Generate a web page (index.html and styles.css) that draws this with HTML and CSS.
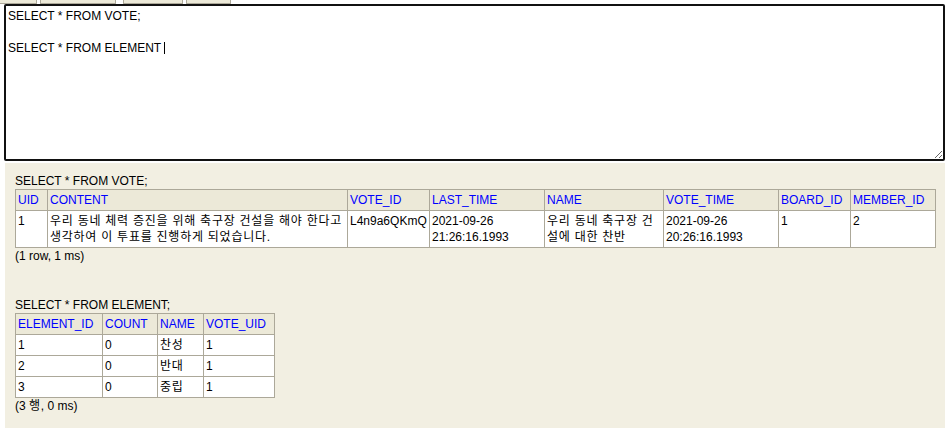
FILE: index.html
```html
<!DOCTYPE html>
<html lang="ko">
<head>
<meta charset="utf-8">
<title>H2 Console</title>
<link rel="stylesheet" href="styles.css">
</head>
<body>
<div class="page">
  <div class="tabs">
    <span class="tab tab-a"></span>
    <span class="tab tab-b"></span>
    <span class="tab tab-c"></span>
    <span class="tab tab-d"></span>
  </div>
  <div class="editor">SELECT * FROM VOTE;

SELECT * FROM ELEMENT <span class="caret"></span></div>
  <div class="result">
    <p class="query">SELECT * FROM VOTE;</p>
    <table class="grid grid-vote">
      <colgroup>
        <col class="w-uid"><col class="w-content"><col class="w-voteid"><col class="w-last"><col class="w-name"><col class="w-vtime"><col class="w-board"><col class="w-member">
      </colgroup>
      <tr><th>UID</th><th>CONTENT</th><th>VOTE_ID</th><th>LAST_TIME</th><th>NAME</th><th>VOTE_TIME</th><th>BOARD_ID</th><th>MEMBER_ID</th></tr>
      <tr><td>1</td><td class="ko">우리 동네 체력 증진을 위해 축구장 건설을 해야 한다고 생각하여 이 투표를 진행하게 되었습니다.</td><td>L4n9a6QKmQ</td><td>2021-09-26 21:26:16.1993</td><td class="ko">우리 동네 축구장 건설에 대한 찬반</td><td>2021-09-26 20:26:16.1993</td><td>1</td><td>2</td></tr>
    </table>
    <p class="status status-gap">(1 row, 1 ms)</p>
    <p class="query">SELECT * FROM ELEMENT;</p>
    <table class="grid grid-element">
      <colgroup>
        <col class="w-eid"><col class="w-count"><col class="w-ename"><col class="w-vuid">
      </colgroup>
      <tr><th>ELEMENT_ID</th><th>COUNT</th><th>NAME</th><th>VOTE_UID</th></tr>
      <tr><td>1</td><td>0</td><td class="ko">찬성</td><td>1</td></tr>
      <tr><td>2</td><td>0</td><td class="ko">반대</td><td>1</td></tr>
      <tr><td>3</td><td>0</td><td class="ko">중립</td><td>1</td></tr>
    </table>
    <p class="status">(3 <span class="ko">행</span>, 0 ms)</p>
  </div>
</div>
</body>
</html>
```

FILE: styles.css
```css
html, body {
  margin: 0;
  padding: 0;
  background: #ffffff;
  overflow: hidden;
}
body, td, th, p, div {
  font-family: "Liberation Sans", "Noto Sans CJK KR", sans-serif;
  font-size: 12px;
  line-height: 16px;
  color: #000;
}
.page {
  display: flex;
  flex-direction: column;
  height: 428px;
}
.tabs {
  display: flex;
  height: 4px;
  flex: none;
}
.tab {
  display: block;
  height: 4px;
  box-sizing: border-box;
  background: #ece9d8;
  border: 1px solid #aca899;
  border-top: none;
}
.tab-a { width: 37px; border-left: none; }
.tab-b { width: 76px; margin-left: 3px; }
.tab-c { width: 60px; margin-left: 7px; }
.tab-d { width: 45px; margin-left: 3px; }

.editor {
  flex: none;
  box-sizing: border-box;
  margin-left: 4px;
  width: 941px;
  height: 157px;
  border: 2px solid #111111;
  border-radius: 2px;
  padding: 2px;
  white-space: pre-wrap;
  background: #fff;
  overflow: auto;
  resize: both;
}
.caret {
  display: inline-block;
  width: 1px;
  height: 12px;
  background: #000;
  vertical-align: -2px;
}
.result {
  flex: 1;
  margin: 2px 0 0 5px;
  padding: 10px 10px 0 10px;
  background: #f2efe2;
}
.query, .status {
  margin: 0;
}
.status-gap {
  margin-bottom: 33px;
}
.ko {
  letter-spacing: 0.75px;
}
.grid {
  border-collapse: collapse;
  table-layout: fixed;
  background: #ece9d8;
}
.grid th, .grid td {
  border: 1px solid #aca899;
  padding: 2px;
  text-align: left;
  vertical-align: top;
  font-weight: normal;
}
.grid th {
  background: #ece9d8;
  color: #0000ff;
  white-space: nowrap;
  overflow: hidden;
}
.grid td {
  background: #ffffff;
}
.grid-vote { width: 920px; }
.w-uid { width: 32px; }
.w-content { width: 300px; }
.w-voteid { width: 82px; }
.w-last { width: 115px; }
.w-name { width: 119px; }
.w-vtime { width: 115px; }
.w-board { width: 72px; }
.w-member { width: 85px; }

.grid-element { width: 259px; }
.w-eid { width: 87px; }
.w-count { width: 55px; }
.w-ename { width: 46px; }
.w-vuid { width: 71px; }
```
